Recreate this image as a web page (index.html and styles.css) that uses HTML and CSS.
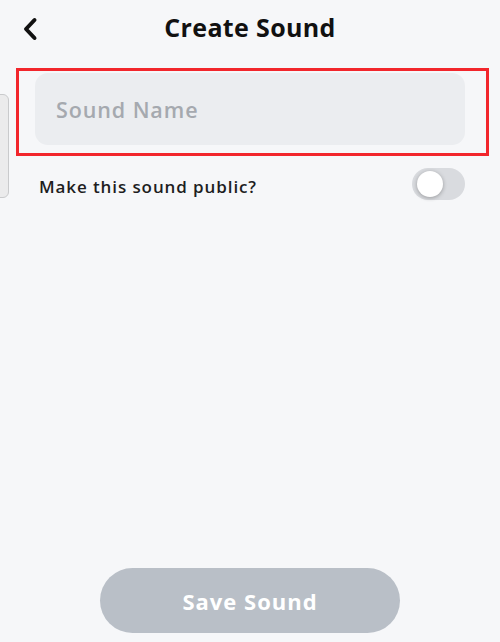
FILE: index.html
```html
<!DOCTYPE html>
<html>
<head>
<meta charset="utf-8">
<link rel="stylesheet" href="styles.css">
</head>
<body>
<div class="screen">
  <div class="peek"></div>
  <header class="header">
    <button class="back" aria-label="Back">
      <svg width="16" height="24" viewBox="0 0 16 24"><path d="M12.5 3 L4 12 L12.5 21" fill="none" stroke="#111" stroke-width="4" stroke-linecap="round" stroke-linejoin="round"/></svg>
    </button>
    <h1 class="title">Create Sound</h1>
  </header>
  <div class="highlight">
    <div class="input">Sound Name</div>
  </div>
  <div class="row">
    <span class="label">Make this sound public?</span>
    <div class="toggle"><div class="knob"></div></div>
  </div>
  <button class="save">Save Sound</button>
</div>
</body>
</html>
```
FILE: styles.css
```css
html, body {
  margin: 0;
  padding: 0;
  background: #f6f7f9;
}
.screen {
  position: relative;
  width: 500px;
  height: 642px;
  display: flex;
  flex-direction: column;
  font-family: "Open Sans", Lato, sans-serif;
  overflow: hidden;
}
.peek {
  position: absolute;
  left: -6px;
  top: 94px;
  width: 13px;
  height: 102px;
  border: 1px solid #c9cacc;
  border-radius: 6px;
  background: #ebebec;
}
.header {
  position: relative;
  height: 68px;
  display: flex;
  justify-content: center;
}
.back {
  position: absolute;
  left: 20px;
  top: 16px;
  padding: 0;
  border: 0;
  background: none;
  width: 20px;
  height: 26px;
  display: flex;
  align-items: center;
  justify-content: center;
}
.title {
  margin: 0;
  margin-top: 10px;
  font-size: 25px;
  line-height: 34px;
  font-weight: 700;
  color: #111;
  letter-spacing: 0.35px;
}
.highlight {
  margin: 0 11px 0 16px;
  border: 3px solid #f2262c;
  padding: 2px 21px 8px 16px;
}
.input {
  height: 72px;
  border-radius: 13px;
  background: #ebedf0;
  display: flex;
  align-items: center;
  padding-left: 21px;
  font-size: 21.5px;
  font-weight: 600;
  color: #a5a9af;
  letter-spacing: 0.9px;
}
.row {
  margin-top: 11px;
  height: 34px;
  display: flex;
  align-items: center;
  justify-content: space-between;
  padding: 0 35px 0 39px;
}
.label {
  font-size: 17px;
  font-weight: 600;
  color: #1e1e1f;
  padding-top: 4px;
  letter-spacing: 0.9px;
}
.toggle {
  width: 53px;
  height: 32px;
  border-radius: 16px;
  background: #d9dbdf;
  display: flex;
  align-items: center;
  padding-left: 5px;
  box-sizing: border-box;
}
.knob {
  width: 26px;
  height: 26px;
  border-radius: 50%;
  background: #fff;
  box-shadow: 0 1px 4px rgba(0,0,0,0.3);
}
.save {
  margin: auto auto 9px;
  width: 300px;
  height: 65px;
  border: 0;
  border-radius: 33px;
  background: #b9bfc7;
  color: #fff;
  font-family: "Open Sans", Lato, sans-serif;
  font-size: 22px;
  font-weight: 700;
  letter-spacing: 1px;
}
```
